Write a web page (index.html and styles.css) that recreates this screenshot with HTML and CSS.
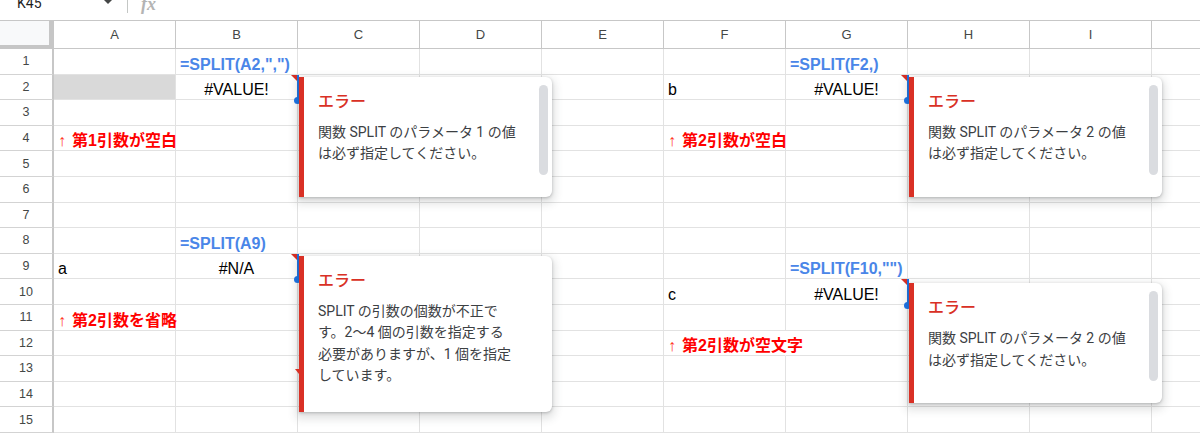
FILE: index.html
```html
<!DOCTYPE html>
<html lang="ja">
<head>
<meta charset="utf-8">
<title>SPLIT エラー</title>
<link rel="stylesheet" href="styles.css">
</head>
<body>
<div class="topbar">
  <div class="namebox">
    <span class="namebox-text">K45</span>
    <svg class="caret" width="10" height="6" viewBox="0 0 10 6"><path d="M0 0H10L5 5Z" fill="#444746"/></svg>
  </div>
  <div class="divider"></div>
  <span class="fx">fx</span>
</div>

<div class="sheet">
  <div class="hdr">
    <div class="corner"></div>
    <div class="ch">A</div><div class="ch">B</div><div class="ch">C</div><div class="ch">D</div><div class="ch">E</div>
    <div class="ch">F</div><div class="ch">G</div><div class="ch">H</div><div class="ch">I</div><div class="ch"></div>
  </div>

  <div class="row">
    <div class="rh">1</div>
    <div class="c"></div>
    <div class="c blue">=SPLIT(A2,",")</div>
    <div class="c"></div><div class="c"></div><div class="c"></div><div class="c"></div>
    <div class="c blue">=SPLIT(F2,)</div>
    <div class="c"></div><div class="c"></div><div class="c"></div>
  </div>

  <div class="row">
    <div class="rh">2</div>
    <div class="c gray"></div>
    <div class="c err">#VALUE!
      <span class="sel"></span><span class="dot"></span>
      <div class="pop">
        <div class="pop-title">エラー</div>
        <div class="pop-body">関数 SPLIT のパラメータ 1 の値<br>は必ず指定してください。</div>
        <div class="thumb"></div>
      </div>
    </div>
    <div class="c"></div><div class="c"></div><div class="c"></div>
    <div class="c">b</div>
    <div class="c err">#VALUE!
      <span class="sel"></span><span class="dot"></span>
      <div class="pop">
        <div class="pop-title">エラー</div>
        <div class="pop-body">関数 SPLIT のパラメータ 2 の値<br>は必ず指定してください。</div>
        <div class="thumb"></div>
      </div>
    </div>
    <div class="c"></div><div class="c"></div><div class="c"></div>
  </div>

  <div class="row">
    <div class="rh">3</div>
    <div class="c"></div><div class="c"></div><div class="c"></div><div class="c"></div><div class="c"></div>
    <div class="c"></div><div class="c"></div><div class="c"></div><div class="c"></div><div class="c"></div>
  </div>

  <div class="row">
    <div class="rh">4</div>
    <div class="c red"><span class="arrow">↑</span>第1引数が空白</div>
    <div class="c"></div><div class="c"></div><div class="c"></div><div class="c"></div>
    <div class="c red"><span class="arrow">↑</span>第2引数が空白</div>
    <div class="c"></div><div class="c"></div><div class="c"></div><div class="c"></div>
  </div>

  <div class="row">
    <div class="rh">5</div>
    <div class="c"></div><div class="c"></div><div class="c"></div><div class="c"></div><div class="c"></div>
    <div class="c"></div><div class="c"></div><div class="c"></div><div class="c"></div><div class="c"></div>
  </div>

  <div class="row">
    <div class="rh">6</div>
    <div class="c"></div><div class="c"></div><div class="c"></div><div class="c"></div><div class="c"></div>
    <div class="c"></div><div class="c"></div><div class="c"></div><div class="c"></div><div class="c"></div>
  </div>

  <div class="row">
    <div class="rh">7</div>
    <div class="c"></div><div class="c"></div><div class="c"></div><div class="c"></div><div class="c"></div>
    <div class="c"></div><div class="c"></div><div class="c"></div><div class="c"></div><div class="c"></div>
  </div>

  <div class="row">
    <div class="rh">8</div>
    <div class="c"></div>
    <div class="c blue">=SPLIT(A9)</div>
    <div class="c"></div><div class="c"></div><div class="c"></div>
    <div class="c"></div><div class="c"></div><div class="c"></div><div class="c"></div><div class="c"></div>
  </div>

  <div class="row">
    <div class="rh">9</div>
    <div class="c">a</div>
    <div class="c err">#N/A
      <span class="sel"></span><span class="dot"></span>
      <div class="pop pop-tall">
        <div class="pop-title">エラー</div>
        <div class="pop-body">SPLIT の引数の個数が不正で<br>す。2～4 個の引数を指定する<br>必要がありますが、1 個を指定<br>しています。</div>
        <span class="notch"></span>
      </div>
    </div>
    <div class="c"></div><div class="c"></div><div class="c"></div><div class="c"></div>
    <div class="c blue">=SPLIT(F10,"")</div>
    <div class="c"></div><div class="c"></div><div class="c"></div>
  </div>

  <div class="row">
    <div class="rh">10</div>
    <div class="c"></div><div class="c"></div><div class="c"></div><div class="c"></div><div class="c"></div>
    <div class="c">c</div>
    <div class="c err err-low">#VALUE!
      <span class="sel"></span><span class="dot"></span>
      <div class="pop">
        <div class="pop-title">エラー</div>
        <div class="pop-body">関数 SPLIT のパラメータ 2 の値<br>は必ず指定してください。</div>
        <div class="thumb"></div>
      </div>
    </div>
    <div class="c"></div><div class="c"></div><div class="c"></div>
  </div>

  <div class="row">
    <div class="rh">11</div>
    <div class="c red"><span class="arrow">↑</span>第2引数を省略</div>
    <div class="c"></div><div class="c"></div><div class="c"></div><div class="c"></div>
    <div class="c"></div><div class="c"></div><div class="c"></div><div class="c"></div><div class="c"></div>
  </div>

  <div class="row">
    <div class="rh">12</div>
    <div class="c"></div><div class="c"></div><div class="c"></div><div class="c"></div><div class="c"></div>
    <div class="c red overflow"><span class="arrow">↑</span>第2引数が空文字</div>
    <div class="c"></div><div class="c"></div><div class="c"></div><div class="c"></div>
  </div>

  <div class="row">
    <div class="rh">13</div>
    <div class="c"></div><div class="c"></div><div class="c"></div><div class="c"></div><div class="c"></div>
    <div class="c"></div><div class="c"></div><div class="c"></div><div class="c"></div><div class="c"></div>
  </div>

  <div class="row">
    <div class="rh">14</div>
    <div class="c"></div><div class="c"></div><div class="c"></div><div class="c"></div><div class="c"></div>
    <div class="c"></div><div class="c"></div><div class="c"></div><div class="c"></div><div class="c"></div>
  </div>

  <div class="row">
    <div class="rh">15</div>
    <div class="c"></div><div class="c"></div><div class="c"></div><div class="c"></div><div class="c"></div>
    <div class="c"></div><div class="c"></div><div class="c"></div><div class="c"></div><div class="c"></div>
  </div>
</div>
</body>
</html>
```

FILE: styles.css
```css
* {
  box-sizing: border-box;
}

html, body {
  margin: 0;
  padding: 0;
  background: #ffffff;
}

body {
  width: 1200px;
  height: 433px;
  overflow: hidden;
  font-family: "Liberation Sans", "Noto Sans CJK JP", sans-serif;
}

/* ---------- formula bar (cut at the top) ---------- */
.topbar {
  height: 21px;
  border-bottom: 1px solid #c7c7c7;
  display: flex;
  align-items: flex-start;
  overflow: hidden;
}

.namebox {
  width: 127px;
  flex: none;
  display: flex;
  align-items: flex-start;
  padding-left: 17px;
}

.namebox-text {
  width: 86px;
  font-family: Roboto, "Liberation Sans", sans-serif;
  font-size: 14px;
  line-height: 20px;
  margin-top: -7px;
  color: #1f1f1f;
}

.caret {
  display: block;
  margin-top: -1px;
}

.divider {
  width: 1px;
  height: 13px;
  flex: none;
  background: #c4c7c5;
}

.fx {
  margin-left: 13px;
  margin-top: -6px;
  font-family: "Liberation Serif", serif;
  font-style: italic;
  font-weight: 700;
  font-size: 18px;
  line-height: 20px;
  color: #b4b4b4;
}

/* ---------- grid ---------- */
.sheet {
  overflow: hidden;
}

.hdr {
  display: flex;
  height: 28px;
}

.corner {
  width: 54px;
  flex: none;
  background: #f8f9fa;
  border-right: 5px solid #c6c6c6;
  border-bottom: 4px solid #c6c6c6;
}

.ch {
  width: 122px;
  flex: none;
  border-right: 1px solid #c7c7c7;
  border-bottom: 1px solid #c7c7c7;
  display: flex;
  align-items: center;
  justify-content: center;
  font-size: 13px;
  color: #444746;
}

.row {
  display: flex;
  height: 25.6px;
}

.rh {
  width: 54px;
  flex: none;
  border-right: 2px solid #c7c7c7;
  border-bottom: 1px solid #d3d3d3;
  display: flex;
  align-items: center;
  justify-content: center;
  font-size: 12.5px;
  color: #444746;
}

.c {
  width: 122px;
  flex: none;
  border-right: 1px solid #e2e2e2;
  border-bottom: 1px solid #e2e2e2;
  display: flex;
  align-items: flex-end;
  padding: 0 4px 0;
  font-size: 16px;
  line-height: 18px;
  white-space: nowrap;
  color: #000000;
}

.gray {
  background: #d9d9d9;
}

.blue {
  color: #4a86e8;
  font-weight: 700;
}

.red {
  color: #ff0000;
  font-weight: 700;
}

.arrow {
  font-weight: 400;
  color: #ff3b1f;
  margin-right: 6px;
}

.overflow {
  border-right-color: transparent;
}

/* ---------- error cells ---------- */
.err {
  justify-content: center;
  position: relative;
  z-index: 5;
}

.err::before {
  content: "";
  position: absolute;
  top: 0;
  right: -1px;
  border-top: 7px solid #d93025;
  border-left: 7px solid transparent;
}

.sel {
  position: absolute;
  top: 0;
  bottom: -1px;
  right: -2px;
  width: 2px;
  background: #1a73e8;
}

.dot {
  position: absolute;
  right: -4px;
  bottom: -5px;
  width: 7px;
  height: 7px;
  border-radius: 50%;
  background: #1a73e8;
}

.pop {
  position: absolute;
  left: calc(100% + 2px);
  top: 2px;
  width: 253px;
  height: 120px;
  background: #ffffff;
  border-left: 5px solid #d93025;
  border-radius: 0 6px 6px 0;
  box-shadow: 0 1px 3px rgba(60, 64, 67, 0.3), 0 4px 8px 3px rgba(60, 64, 67, 0.15);
  padding: 13px 0 0 14px;
  text-align: left;
  font-family: Roboto, "Noto Sans CJK JP", sans-serif;
  white-space: nowrap;
}

.err-low .pop {
  top: 4px;
}

.pop-tall {
  height: 156px;
}

.pop-title {
  font-size: 16px;
  line-height: 24px;
  font-weight: 500;
  color: #d93025;
}

.pop-body {
  margin-top: 8px;
  font-size: 14px;
  line-height: 21.5px;
  font-weight: 400;
  color: #3c4043;
}

.thumb {
  position: absolute;
  top: 8px;
  right: 4px;
  width: 9px;
  height: 90px;
  border-radius: 5px;
  background: #dadce0;
}

.notch {
  position: absolute;
  left: -9px;
  top: 113px;
  border-top: 5px solid #d93025;
  border-left: 4px solid transparent;
}
```
